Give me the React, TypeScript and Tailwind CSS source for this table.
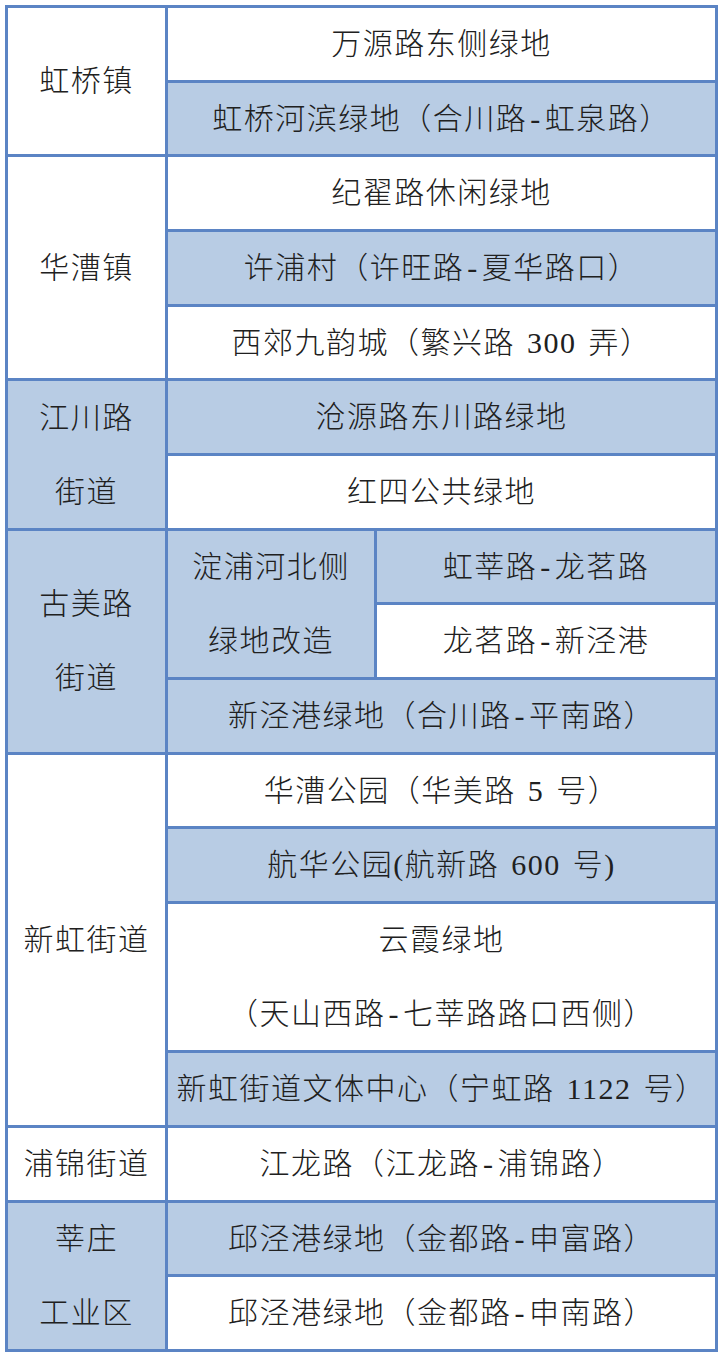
import React from "react";

const W = "bg-white";
const B = "bg-[#b8cce4]";

function Line({ text }: { text: string }) {
  const parts = text.split("-");
  return (
    <div className="leading-[74px]">
      {parts.map((p, i) => (
        <React.Fragment key={i}>
          {i > 0 && <span className="mx-[3px]">-</span>}
          {p}
        </React.Fragment>
      ))}
    </div>
  );
}

function Cell({
  className,
  lines,
}: {
  className: string;
  lines: string[];
}) {
  return (
    <div
      className={
        "flex flex-col items-center justify-center text-center whitespace-nowrap " +
        className
      }
    >
      {lines.map((l, i) => (
        <Line key={i} text={l} />
      ))}
    </div>
  );
}

export default function App() {
  return (
    <div className="bg-white w-[724px] h-[1357px] pl-[5px] pt-[5px]">
      <div className="grid grid-cols-[157px_206px_338px] grid-rows-[repeat(18,minmax(0,1fr))] gap-[3px] p-[3px] bg-[#5b84c4] w-[713px] h-[1347px] text-[30px] font-light tracking-[1.5px] [word-spacing:3px] text-[#202020] font-['Liberation_Serif','Noto_Sans_CJK_SC',serif]">
        {/* 虹桥镇 */}
        <Cell className={`${W} col-start-1 row-start-1 row-span-2`} lines={["虹桥镇"]} />
        <Cell className={`${W} col-start-2 col-span-2 row-start-1`} lines={["万源路东侧绿地"]} />
        <Cell className={`${B} col-start-2 col-span-2 row-start-2`} lines={["虹桥河滨绿地（合川路-虹泉路）"]} />

        {/* 华漕镇 */}
        <Cell className={`${W} col-start-1 row-start-3 row-span-3`} lines={["华漕镇"]} />
        <Cell className={`${W} col-start-2 col-span-2 row-start-3`} lines={["纪翟路休闲绿地"]} />
        <Cell className={`${B} col-start-2 col-span-2 row-start-4`} lines={["许浦村（许旺路-夏华路口）"]} />
        <Cell className={`${W} col-start-2 col-span-2 row-start-5`} lines={["西郊九韵城（繁兴路 300 弄）"]} />

        {/* 江川路街道 */}
        <Cell className={`${B} col-start-1 row-start-6 row-span-2`} lines={["江川路", "街道"]} />
        <Cell className={`${B} col-start-2 col-span-2 row-start-6`} lines={["沧源路东川路绿地"]} />
        <Cell className={`${W} col-start-2 col-span-2 row-start-7`} lines={["红四公共绿地"]} />

        {/* 古美路街道 */}
        <Cell className={`${B} col-start-1 row-start-8 row-span-3`} lines={["古美路", "街道"]} />
        <Cell className={`${B} col-start-2 row-start-8 row-span-2`} lines={["淀浦河北侧", "绿地改造"]} />
        <Cell className={`${B} col-start-3 row-start-8`} lines={["虹莘路-龙茗路"]} />
        <Cell className={`${W} col-start-3 row-start-9`} lines={["龙茗路-新泾港"]} />
        <Cell className={`${B} col-start-2 col-span-2 row-start-10`} lines={["新泾港绿地（合川路-平南路）"]} />

        {/* 新虹街道 */}
        <Cell className={`${W} col-start-1 row-start-11 row-span-5`} lines={["新虹街道"]} />
        <Cell className={`${W} col-start-2 col-span-2 row-start-11`} lines={["华漕公园（华美路 5 号）"]} />
        <Cell className={`${B} col-start-2 col-span-2 row-start-12`} lines={["航华公园(航新路 600 号)"]} />
        <Cell className={`${W} col-start-2 col-span-2 row-start-13 row-span-2`} lines={["云霞绿地", "（天山西路-七莘路路口西侧）"]} />
        <Cell className={`${B} col-start-2 col-span-2 row-start-15`} lines={["新虹街道文体中心（宁虹路 1122 号）"]} />

        {/* 浦锦街道 */}
        <Cell className={`${W} col-start-1 row-start-16`} lines={["浦锦街道"]} />
        <Cell className={`${W} col-start-2 col-span-2 row-start-16`} lines={["江龙路（江龙路-浦锦路）"]} />

        {/* 莘庄工业区 */}
        <Cell className={`${B} col-start-1 row-start-17 row-span-2`} lines={["莘庄", "工业区"]} />
        <Cell className={`${B} col-start-2 col-span-2 row-start-17`} lines={["邱泾港绿地（金都路-申富路）"]} />
        <Cell className={`${W} col-start-2 col-span-2 row-start-18`} lines={["邱泾港绿地（金都路-申南路）"]} />
      </div>
    </div>
  );
}
